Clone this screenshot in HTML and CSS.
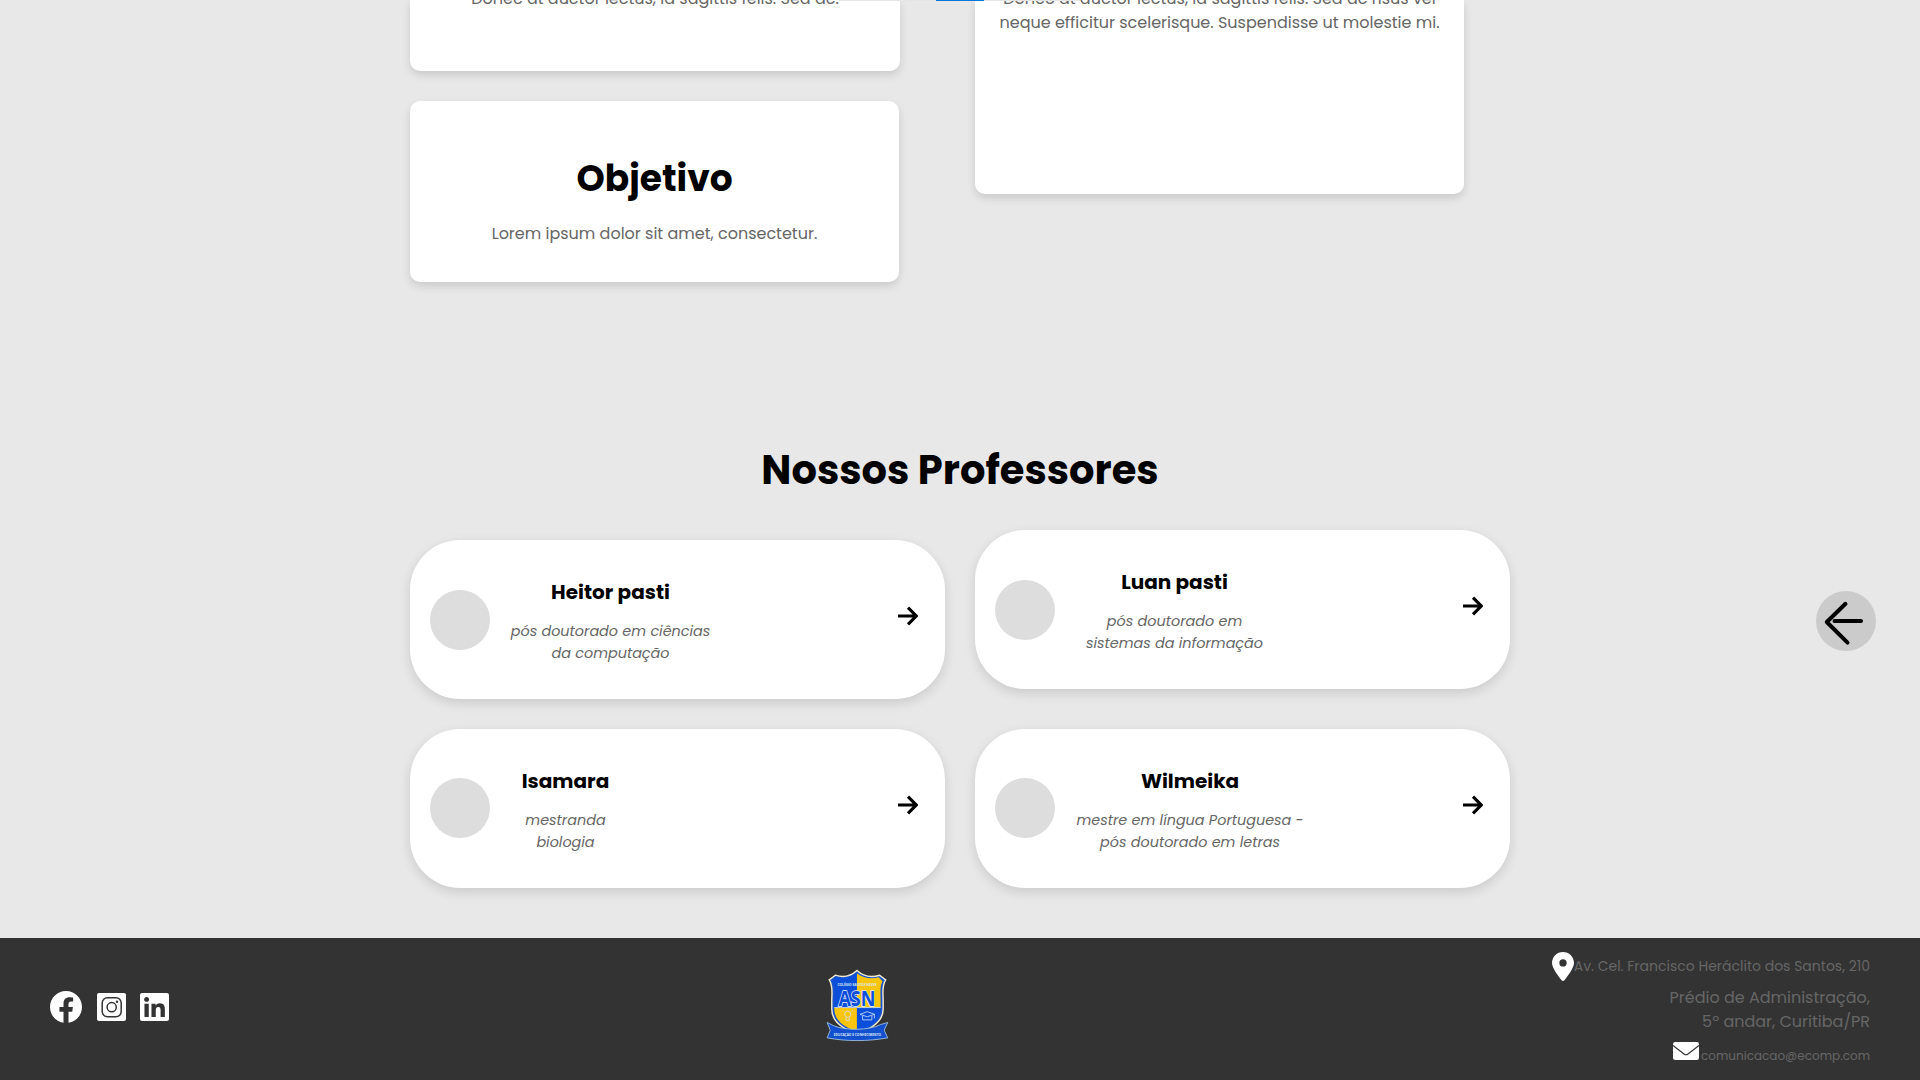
FILE: index.html
```html
<!DOCTYPE html>
<html lang="pt-BR">
<head>
<meta charset="utf-8">
<title>Nossos Professores</title>
<link rel="stylesheet" href="styles.css">
</head>
<body>
<div class="loader"><span class="loader-bar"></span></div>
<main class="main">
  <section class="about">
    <div class="about-col">
      <article class="card card-history"><p class="body-text">Donec at auctor lectus, id sagittis felis. Sed ac.</p></article>
      <article class="card card-goal">
        <h2 class="card-title">Objetivo</h2>
        <p class="body-text">Lorem ipsum dolor sit amet, consectetur.</p>
      </article>
    </div>
    <article class="card card-mission"><p class="body-text">Donec at auctor lectus, id sagittis felis. Sed ac risus vel<br>neque efficitur scelerisque. Suspendisse ut molestie mi.</p></article>
  </section>

  <h1 class="section-title">Nossos Professores</h1>

  <section class="teachers">
    <article class="teacher heitor">
      <span class="avatar"></span>
      <div class="info"><h3>Heitor pasti</h3><p>pós doutorado em ciências<br>da computação</p></div>
      <svg class="arrow" viewBox="0 0 20 20"><path d="M0 10H18M10 1.7L18.2 10L10 18.3"/></svg>
    </article>
    <article class="teacher luan">
      <span class="avatar"></span>
      <div class="info"><h3>Luan pasti</h3><p>pós doutorado em<br>sistemas da informação</p></div>
      <svg class="arrow" viewBox="0 0 20 20"><path d="M0 10H18M10 1.7L18.2 10L10 18.3"/></svg>
    </article>
    <article class="teacher isamara">
      <span class="avatar"></span>
      <div class="info"><h3>Isamara</h3><p>mestranda<br>biologia</p></div>
      <svg class="arrow" viewBox="0 0 20 20"><path d="M0 10H18M10 1.7L18.2 10L10 18.3"/></svg>
    </article>
    <article class="teacher wilmeika">
      <span class="avatar"></span>
      <div class="info"><h3>Wilmeika</h3><p>mestre em língua Portuguesa -<br>pós doutorado em letras</p></div>
      <svg class="arrow" viewBox="0 0 20 20"><path d="M0 10H18M10 1.7L18.2 10L10 18.3"/></svg>
    </article>
  </section>
</main>

<footer class="footer">
  <nav class="social">
    <svg class="facebook" viewBox="8 8 496 496"><path d="M504 256C504 119 393 8 256 8S8 119 8 256c0 123.78 90.69 226.38 209.25 245V327.69h-63V256h63v-54.64c0-62.15 37-96.48 93.67-96.48 27.14 0 55.52 4.84 55.52 4.84v61h-31.28c-30.8 0-40.41 19.12-40.41 38.73V256h68.78l-11 71.69h-57.78V501C413.31 482.38 504 379.78 504 256z"/></svg>
    <svg class="square" viewBox="0 0 29 28"><rect width="29" height="28" rx="2"/><g class="camera"><rect x="5.2" y="4.7" width="19" height="19" rx="5.2"/><circle cx="14.7" cy="14.2" r="4.6"/></g><circle class="lens" cx="20" cy="8.8" r="1.2"/></svg>
    <svg class="square" viewBox="0 32 448 448" preserveAspectRatio="none"><path d="M416 32H31.9C14.3 32 0 46.5 0 64.3v383.4C0 465.5 14.3 480 31.9 480H416c17.6 0 32-14.5 32-32.3V64.3c0-17.8-14.4-32.3-32-32.3zM135.4 416H69V202.2h66.5V416zm-33.2-243c-21.3 0-38.5-17.3-38.5-38.5S80.9 96 102.2 96c21.2 0 38.5 17.3 38.5 38.5 0 21.3-17.2 38.5-38.5 38.5zm282.1 243h-66.4V312c0-24.8-.5-56.7-34.5-56.7-34.6 0-39.9 27-39.9 54.9V416h-66.4V202.2h63.7v29.2h.9c8.9-16.8 30.6-34.5 62.9-34.5 67.2 0 79.7 44.3 79.7 101.9V416z"/></svg>
  </nav>

  <svg class="crest" viewBox="18 18 64 72">
    <defs><clipPath id="shield"><path d="M48 23C42 28 34 29 28 27L24 31C27 36 26 42 26 50V58C26 68 34 75 48 80C62 75 71 68 71 58V50C71 42 70 36 73 31L69 27C62 29 54 28 48 23Z"/></clipPath></defs>
    <path class="crest-rim" d="M48 20.5C42 26 34 27.5 27 25L21 29.5C25 35 23.5 42 23.5 50V58C23.5 70 33 77 48 82C63 77 73.5 70 73.5 58V50C73.5 42 72 35 76 29.5L70 25C62 27.5 54 26 48 20.5Z"/>
    <g clip-path="url(#shield)">
      <rect class="blue" x="20" y="20" width="28" height="37"/><rect class="gold" x="48" y="20" width="28" height="37"/>
      <rect class="gold" x="20" y="56.5" width="28" height="28"/><rect class="blue" x="48" y="56.5" width="28" height="28"/>
      <path class="line" d="M23 56.5H75"/>
    </g>
    <text class="crest-top" x="48" y="35.5" textLength="38" lengthAdjust="spacingAndGlyphs">COLÉGIO SANTOS NEVES</text>
    <text class="crest-name" x="48" y="54.5" textLength="36" lengthAdjust="spacingAndGlyphs">ASN</text>
    <circle class="line" cx="39" cy="63" r="3"/><path class="line" d="M35 60l-1-1M43 60l1-1M37.5 66v3h3v-3"/>
    <path class="line" d="M51 63l7-2.5 7 2.5-7 2.5zM53.5 64.500v4h9v-4M65 63v4"/>
    <path class="ribbon" d="M25 74L19 71L22 78.500L19 86C38 89.500 58 89.500 78 86L74.500 78.500L78 71L71 73C60 79 36 79 25 74Z"/>
    <text class="crest-motto" x="48.5" y="84.5" textLength="46" lengthAdjust="spacingAndGlyphs">EDUCAÇÃO E CONHECIMENTO</text>
  </svg>

  <address class="address">
    <p class="row street"><svg class="pin" viewBox="0 0 384 512" preserveAspectRatio="none"><path d="M215.7 499.2C267 435 384 279.4 384 192C384 86 298 0 192 0S0 86 0 192c0 87.4 117 243 168.3 307.2c12.3 15.3 35.1 15.3 47.4 0zM192 128a64 64 0 1 1 0 128 64 64 0 1 1 0-128z"/></svg><span>Av. Cel. Francisco Heráclito dos Santos, 210</span></p>
    <p class="building">Prédio de Administração,<br>5º andar, Curitiba/PR</p>
    <p class="row mail"><svg class="envelope" viewBox="0 0 26 18"><rect width="26" height="18" rx="2.2"/><path d="M0 3.5L11 12Q13 13.5 15 12L26 3.5"/></svg><span>comunicacao@ecomp.com</span></p>
  </address>
</footer>

<button class="back" aria-label="Voltar"><svg viewBox="0 0 60 60"><path d="M29.5 12.8L10.8 31L31.5 51.7M18.5 30H45"/></svg></button>
</body>
</html>
```
FILE: styles.css
```css
* { box-sizing: border-box; margin: 0; padding: 0; }
body {
  position: relative;
  width: 1920px;
  height: 1080px;
  overflow: hidden;
  background: #e8e8e8;
  color: #000;
  font-family: Poppins, Inter, sans-serif;
}
svg { display: block; flex: none; }
.loader { position: absolute; z-index: 2; top: 0; left: 839px; width: 241px; height: 1px; padding-left: 97px; background: #e5e5e5; }
.loader-bar { display: block; width: 48px; height: 1px; background: #0078d7; }

.main { height: 938px; padding: 0 410px; }
.about { display: flex; gap: 75px; align-items: flex-start; height: 282px; }
.about-col { display: flex; flex-direction: column; gap: 30px; width: 490px; }
.card { background: #fff; border-radius: 10px; box-shadow: 0 4px 8px rgba(0, 0, 0, .13); text-align: center; }
.card-history { display: flow-root; height: 71px; border-radius: 0 0 10px 10px; }
.card-goal { width: 489px; height: 181px; padding-top: 51px; }
.card-mission { display: flow-root; width: 489px; height: 194px; border-radius: 0 0 10px 10px; }
.card-title { font-size: 36px; line-height: 54px; font-weight: 700; }
.body-text { margin-top: -13px; color: #666; font-size: 16px; line-height: 24px; }
.card-goal .body-text { margin-top: 16px; }
.section-title { margin-top: 158px; font-size: 40px; line-height: 60px; font-weight: 700; text-align: center; }

.teachers { display: grid; grid-template-columns: 535px 535px; gap: 30px; margin-top: 30px; align-items: end; }
.teacher { display: flex; align-items: center; height: 159px; padding: 0 27px 0 20px; border-radius: 50px; background: #fff; box-shadow: 0 4px 12px rgba(0, 0, 0, .13); }
.luan { align-self: start; }
.heitor { margin-top: 10px; }
.avatar { width: 60px; height: 60px; border-radius: 50%; background: #ddd; }
.isamara .avatar, .wilmeika .avatar { margin-top: -2px; }
.info { margin: 0 auto 0 10px; padding-top: 2px; text-align: center; }
.heitor .info { width: 221px; }
.luan .info { width: 219px; }
.isamara .info { width: 131px; }
.wilmeika .info { width: 250px; }
.info h3 { font-size: 20px; line-height: 30px; font-weight: 700; }
.info p { margin-top: 13px; color: #666; font-size: 14.4px; line-height: 22px; font-style: italic; }
.arrow { width: 20px; height: 20px; margin-top: -7px; fill: none; stroke: #000; stroke-width: 3.1; }

.footer { display: flex; justify-content: space-between; align-items: center; height: 142px; padding: 0 50px; background: #333; }
.social { display: flex; align-items: center; gap: 14.5px; margin-top: -4px; fill: #fff; }
.facebook { width: 32px; height: 32px; }
.square { width: 29px; height: 28px; }
.camera { fill: none; stroke: #333; stroke-width: 1.5; }
.lens { fill: #333; }
.crest { width: 66px; height: 74px; margin: -8px 3px 0 0; }
.crest-rim { fill: #1b54c9; stroke: #f2ead0; stroke-width: 1.4; }
.blue { fill: #0a4edb; }
.gold { fill: #f9c50c; }
.line { fill: none; stroke: #cfe0f5; stroke-width: .8; }
.ribbon { fill: #1250cf; stroke: #a9cbe0; stroke-width: .8; }
.crest text { font-family: "Open Sans", sans-serif; text-anchor: middle; font-weight: 700; }
.crest-top { font-size: 3px; fill: #dce8f5; }
.crest-motto { font-size: 4px; fill: #dce8f5; }
.crest .crest-name { font-size: 21px; fill: #0a4edb; stroke: #e6eefa; stroke-width: 1.5; paint-order: stroke; }
.address { width: 318px; height: 142px; padding-top: 14px; font-style: normal; color: #666; text-align: right; }
.row { display: flex; justify-content: flex-end; white-space: nowrap; }
.street { height: 29px; font-size: 14px; line-height: 28px; }
.pin { width: 22px; height: 29px; fill: #fff; }
.building { margin-top: 5px; font-size: 16px; line-height: 24px; }
.mail { margin-top: 8px; font-size: 12px; line-height: 27px; gap: 2px; }
.envelope { width: 26px; height: 18px; fill: #fff; }
.envelope path { fill: none; stroke: #333; stroke-width: 1.2; }
.back { position: absolute; left: 1816px; top: 591px; width: 60px; height: 60px; border: 0; border-radius: 50%; background: #cbcbcb; }
.back svg { width: 60px; height: 60px; fill: none; stroke: #000; stroke-width: 4; stroke-linecap: round; stroke-linejoin: round; }
```
